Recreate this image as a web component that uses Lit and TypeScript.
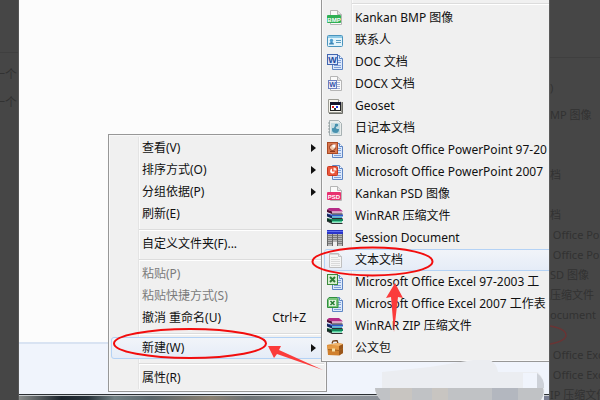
import { LitElement, html, css, svg, nothing, TemplateResult } from "lit";
import { customElement, property } from "lit/decorators.js";
import { classMap } from "lit/directives/class-map.js";

interface Item {
  label?: string;
  icon?: string;
  hint?: string;
  more?: boolean;
  off?: boolean;
  hot?: boolean;
  gap?: boolean;
}

const page = svg`<path d="M3.500 .5h7l4 4v10h-11z" fill="#fafafa" stroke="#b5b5b5"/><path d="M10.500 .5v4h4" fill="#e4e4e4" stroke="#b5b5b5"/>`;
const sheet = svg`<path d="M5.500 1.500h7l3 3v11h-10z" fill="#dce9fb" stroke="#5f86c4"/><path d="M12.500 1.500v3h3" fill="#f5faff" stroke="#5f86c4"/><path d="M11 6.500h3M11 8.500h3M7 11.500h7M7 13.500h7" stroke="#7fa0d8"/>`;
const rar = svg`
  <path d="M0 1.500L2 0h10l4 3.500H5z" fill="#b52a86"/><path d="M5 3.500h10v2H5z" fill="#d9a8c6"/><path d="M0 1.500l5 2V6L0 4z" fill="#4d0c35"/>
  <path d="M0 5.500l5 1h11v2H5z" fill="#2f5cd0"/><path d="M5 8.500h10V10H5z" fill="#55b4cf"/><path d="M0 5.500l5 2.500v2.500L0 8.500z" fill="#14265e"/>
  <path d="M0 10l5 1h11v2H5z" fill="#12855a"/><path d="M5 13h10v1.500H5z" fill="#4fd09a"/><path d="M0 10l5 2.500V15l-5-2z" fill="#0b3522"/>
  <path d="M5 6h10.500M5 10.500h10.500M0 13l5 2.500h10.500" fill="none" stroke="#17171c" stroke-width=".9"/>`;

const icons: Record<string, TemplateResult> = {
  bmp: svg`${page}<rect y="5" width="14" height="8" rx="1" fill="#2fb055"/><text x="7" y="11.500" text-anchor="middle" font-size="6" font-weight="700" fill="#fff">BMP</text>`,
  contact: svg`<rect x=".5" y="3.500" width="15" height="11" rx="1" fill="#e3f4fb" stroke="#4a94bd"/><path d="M1 4h14v2H1z" fill="#8ecae6"/><circle cx="4.500" cy="8.500" r="1.700" fill="#4f9ed0"/><path d="M2 12.500c0-3.500 5-3.500 5 0z" fill="#3c86b8"/><path d="M9 8.500h5M9 10.500h5" stroke="#5b9cc0"/>`,
  doc: svg`${sheet}<rect x=".5" y=".5" width="10" height="10" fill="#dbe6fa" stroke="#4266b0"/><text x="5.500" y="9" text-anchor="middle" font-size="9" font-weight="700" fill="#23499c">W</text>`,
  docx: svg`${page}<path d="M9 6.500h4M9 8.500h4M9 10.500h4M7 12.500h6" stroke="#a5b2d8"/><rect x="1.500" y="4.500" width="8" height="8" fill="#eceffb" stroke="#6d80c0"/><text x="5.500" y="11" text-anchor="middle" font-size="7" font-weight="700" fill="#3550a6">W</text>`,
  geo: svg`<path d="M1.500 1.500h10l3 3v10h-13z" fill="#f6f4ec" stroke="#9a9a92"/><path d="M2 15.500h13.500V4" fill="none" stroke="#6b6b66"/><path d="M11.500 1.500v3h3" fill="#fff" stroke="#9a9a92"/><rect x="3.500" y="4.500" width="10" height="8" fill="#fff" stroke="#222"/><path d="M3 4h11v3H3z" fill="#15152c"/><path d="M5 8h2v2H5z" fill="#e02020"/><path d="M9 8h2v2H9z" fill="#2038e0"/><path d="M7 10h2v2H7z" fill="#333"/>`,
  journal: svg`<path d="M2.500 .5h9l3 3v12h-12z" fill="#e9edec" stroke="#a7b1b3"/><rect x="4" y="3" width="9" height="11" fill="#c4dce2"/><path d="M5 8q3 1 3-4 4-1 3 2l-2 1q-1 2 3 2 0 4-3 4-4 0-4-3z" fill="#4791ae"/><path d="M1 3h2M1 6h2M1 9h2M1 12h2" stroke="#929e9f"/>`,
  ppt: svg`${sheet}<rect x=".5" y=".5" width="10" height="11" fill="#d9774e" stroke="#a94a25"/><circle cx="5.500" cy="5.500" r="3" fill="#f2c7a8" stroke="#8d3418"/><path d="M5.500 5.500V2.500h3v3z" fill="#fff"/><path d="M3 9.500h5" stroke="#8d3418"/>`,
  pptx: svg`${sheet}<rect x=".5" y="2.500" width="10" height="9" rx="1" fill="#e9573c" stroke="#c8381f"/><path d="M5 4.500a2.500 2.500 0 1 0 3 3H5z" fill="#fff"/><path d="M6.500 3.500v3h3a3 3 0 0 0-3-3z" fill="#ffe3d8"/>`,
  psd: svg`${page}<rect y="6" width="14" height="8" rx="1" fill="#e8316f"/><text x="7" y="12.500" text-anchor="middle" font-size="6" font-weight="700" fill="#fff">PSD</text>`,
  rar,
  session: svg`<path d="M0 0h16v16H0z" fill="#b4b4b4"/><path d="M0 0h16v4H0z" fill="#2a35c8"/><path d="M0 1.500h16" stroke="#5e6cf0"/><path d="M1 5.500h4M6 5.500h4M11 5.500h4M1 7.500h4M6 7.500h4M11 7.500h4M1 9.500h4M6 9.500h4M11 9.500h4M1 11.500h4M11 11.500h4M1 13.500h4M11 13.500h4" stroke="#7d7d7d"/><path d="M.5 4v12M5.500 4v12M10.500 4v12M15.500 4v12" stroke="#666"/><path d="M6 12h4v4H6z" fill="#efefef"/>`,
  text: svg`<path d="M2.500 1.500h9l3 3v11h-12z" fill="#f5f5f5" stroke="#c0c0c0"/><path d="M11.500 1.500v3h3" fill="#e6e6e6" stroke="#c0c0c0"/><path d="M4 1v2M6 1v2M8 1v2M10 1v2" stroke="#b5b5b5"/><path d="M4 5.500h7M4 7.500h9M4 9.500h9M4 11.500h9M4 13.500h9" stroke="#dadada"/>`,
  xls: svg`${sheet}<rect x=".5" y=".5" width="10" height="10" fill="#d9efd3" stroke="#3d8b3b"/><path d="M3 3l5 5M8 3L3 8" stroke="#2e7d34" stroke-width="2"/>`,
  xlsx: svg`${sheet}<path d="M2 1.500h8l1 1v9H.5v-8z" fill="#7cc67d" stroke="#2f8f3f"/><rect x="2" y="4" width="7" height="6" fill="#e8f6e6"/><path d="M3.500 5l4 4M7.500 5l-4 4" stroke="#237a31" stroke-width="1.500"/>`,
  bag: svg`<path d="M5 3.500L6 1l4-.500 1 3" fill="none" stroke="#6e3d14" stroke-width="1.300"/><path d="M0 5l11-2 5 1v9l-4 2.500L1 15z" fill="#d07f2c"/><path d="M12 5l4-1v9l-4 2.500z" fill="#9a561a"/><path d="M0 5l11-2 5 1-4 2z" fill="#f0b56b"/><path d="M0 5.500L12 6v4L1 9z" fill="#e59b45"/><path d="M1 9.500l11 1 4-2" fill="none" stroke="#a8641f"/><path d="M5 8.500h3v3H5z" fill="#f5dfa6"/>`,
};

const mainItems: Item[] = [
  { label: "查看(V)", more: true },
  { label: "排序方式(O)", more: true },
  { label: "分组依据(P)", more: true },
  { label: "刷新(E)" },
  { gap: true },
  { label: "自定义文件夹(F)..." },
  { gap: true },
  { label: "粘贴(P)", off: true },
  { label: "粘贴快捷方式(S)", off: true },
  { label: "撤消 重命名(U)", hint: "Ctrl+Z" },
  { gap: true },
  { label: "新建(W)", more: true, hot: true },
  { gap: true },
  { label: "属性(R)" },
];

const newItems: Item[] = [
  { gap: true },
  { label: "Kankan BMP 图像", icon: "bmp" },
  { label: "联系人", icon: "contact" },
  { label: "DOC 文档", icon: "doc" },
  { label: "DOCX 文档", icon: "docx" },
  { label: "Geoset", icon: "geo" },
  { label: "日记本文档", icon: "journal" },
  { label: "Microsoft Office PowerPoint 97-20", icon: "ppt" },
  { label: "Microsoft Office PowerPoint 2007", icon: "pptx" },
  { label: "Kankan PSD 图像", icon: "psd" },
  { label: "WinRAR 压缩文件", icon: "rar" },
  { label: "Session Document", icon: "session" },
  { label: "文本文档", icon: "text", hot: true },
  { label: "Microsoft Office Excel 97-2003 工", icon: "xls" },
  { label: "Microsoft Office Excel 2007 工作表", icon: "xlsx" },
  { label: "WinRAR ZIP 压缩文件", icon: "rar" },
  { label: "公文包", icon: "bag" },
];

@customElement("context-menu")
export class ContextMenu extends LitElement {
  @property({ attribute: false }) items: Item[] = [];

  static styles = css`
    :host {
      display: block;
      box-sizing: border-box;
      border: 1px solid #979797;
      padding: 2px;
      background: #f0f0f0;
      box-shadow: inset 0 0 0 1px #f8f8f8;
    }
    .list {
      display: flex;
      flex-direction: column;
      background: linear-gradient(90deg, transparent 27px, #e4e4e4 27px, #e4e4e4 28px, #fafafa 28px, #fafafa 29px, transparent 29px);
    }
    .item {
      display: flex;
      align-items: center;
      box-sizing: border-box;
      height: 22px;
      padding: 0 7px 0 2px;
      border: 1px solid transparent;
      border-radius: 3px;
      background: none;
      color: #111;
      font: 12px/20px "Noto Sans", "Noto Sans CJK SC", sans-serif;
      text-align: left;
      white-space: nowrap;
    }
    .hot {
      border-color: #b4d2f5;
      background: linear-gradient(#f1f4f9, #e5ecf7);
    }
    .off {
      color: #7b7b7b;
    }
    .icon {
      flex: none;
      width: 16px;
      height: 16px;
      margin-right: 12px;
      font-family: "Liberation Sans", sans-serif;
    }
    .label {
      flex: 1;
      min-width: 0;
      overflow: hidden;
    }
    .hint {
      margin-right: 10px;
    }
    .arrow {
      flex: none;
      border: 4px solid transparent;
      border-left: 5px solid #111;
      border-right: 0;
    }
    .gap {
      height: 8px;
      margin: 0 0 0 28px;
      border: 0;
      background: linear-gradient(transparent 4px, #dcdcdc 4px, #dcdcdc 5px, #fff 5px, #fff 6px, transparent 6px);
    }
  `;

  render() {
    return html`<div class="list" role="menu">
      ${this.items.map((i) =>
        i.gap
          ? html`<hr class="gap" />`
          : html`<button class=${classMap({ item: true, hot: !!i.hot, off: !!i.off })} role="menuitem" ?disabled=${i.off}>
              <svg class="icon" viewBox="0 0 16 16" aria-hidden="true">${i.icon ? icons[i.icon] : nothing}</svg>
              <span class="label">${i.label}</span>
              ${i.hint ? html`<span class="hint">${i.hint}</span>` : nothing}
              ${i.more ? html`<span class="arrow"></span>` : nothing}
            </button>`
      )}
    </div>`;
  }
}

@customElement("app-root")
export class AppRoot extends LitElement {
  static styles = css`
    :host {
      display: grid;
      grid-template-columns: 19px minmax(0, 1fr) 51px;
      height: 100vh;
      overflow: hidden;
      background: #464646;
      color: #323232;
      font: 12px/20px "Noto Sans", "Noto Sans CJK SC", sans-serif;
    }
    .side {
      min-width: 0;
      overflow: hidden;
      white-space: nowrap;
    }
    .left {
      box-sizing: border-box;
      border-right: 1px solid #565656;
      padding-top: 52px;
    }
    .rule {
      height: 1px;
      margin: 0 0 2px;
      border: 0;
      background: #3f3f3f;
    }
    .step {
      display: flex;
      justify-content: flex-end;
      margin: 0;
      padding: 12px 1px 0 0;
      line-height: 16px;
    }
    .right {
      position: relative;
      box-sizing: border-box;
      border-left: 1px solid #5a5a5a;
      padding-top: 57px;
    }
    .faded {
      margin: 0;
      padding: 18px 0 0;
      list-style: none;
      font-size: 11px;
      white-space: pre;
    }
    .faded li {
      height: 20px;
    }
    .faded .first {
      height: 27px;
    }
    .trace {
      position: absolute;
      left: 0;
      top: 325px;
      width: 18px;
      height: 20px;
    }
    .desktop {
      position: relative;
      display: flex;
      flex-direction: column;
      overflow: hidden;
      background: #fcfcfc;
    }
    .files {
      flex: 1;
    }
    .details {
      height: 50px;
      border-top: 2px solid #d9e3f2;
      background: #f0f4fc;
    }
    .taskbar {
      height: 5px;
      border-top: 1px solid #2b2f33;
      background: linear-gradient(90deg, #8a8d8c, #1b232b 8%, #28323a 13%, #718084 18%, #59646a 25%, #8a8173 36%, #6d7377 43%, #90959a 60%, #777c90);
      box-shadow: inset 0 1px #c8cccf;
    }
    .main {
      position: absolute;
      left: 89px;
      top: 134px;
      width: 219px;
    }
    .new {
      position: absolute;
      left: 302px;
      right: -12px;
      top: -4px;
    }
    .marks {
      position: absolute;
      left: 0;
      top: 0;
      width: 530px;
      height: 400px;
    }
  `;

  render() {
    const faded = [")", "MP 图像", "", "", "档", "", "档", " Office Po", " Office Po", "SD 图像", "压缩文件", "ocument", "", " Office Exc", " Office Exc", "IP 压缩文件"];
    return html`
      <aside class="side left">
        <hr class="rule" />
        <p class="step">一个</p>
        <p class="step">一个</p>
      </aside>
      <main class="desktop">
        <div class="files"></div>
        <div class="details"></div>
        <div class="taskbar"></div>
        <context-menu class="main" .items=${mainItems}></context-menu>
        <context-menu class="new" .items=${newItems}></context-menu>
        <svg class="marks" viewBox="19 0 530 400" aria-hidden="true">
          <path d="M382 372L430 367l43-7h17q7 4 8 12h40q8 8 6 24v4H381q-6-6-6-12h7z" fill="#ebedf1" />
          <path d="M375 388h168q2 6-2 12H381q-6-6-6-12z" fill="#c0c2c5" />
          <path d="M390 388h22v12h-22zM432 388h16v12h-16z" fill="#c8c5c1" />
          <path d="M492 388h26v12h-26z" fill="#b3b7bf" />
          <path d="M523 373h14v15h-14z" fill="#f0f4fc" />
          <path d="M537 373q8 6 7 15h-7z" fill="#cdd1d8" />
          <ellipse cx="190" cy="343.500" rx="76" ry="14.500" fill="none" stroke="#f20d0d" stroke-width="2" />
          <ellipse cx="372.500" cy="261.500" rx="60" ry="14" fill="none" stroke="#f20d0d" stroke-width="2" />
          <path d="M268 346l13 0-2 4 44 20-46-16-3 4z" fill="#fb3b3b" />
          <path d="M395 283l8 15-5-1-4 35-3-35-5 1z" fill="#fb3b3b" />
        </svg>
      </main>
      <aside class="side right">
        <hr class="rule" />
        <ul class="faded">${faded.map((t, i) => html`<li class=${i ? "" : "first"}>${t}</li>`)}</ul>
        <svg class="trace" viewBox="0 0 18 20" aria-hidden="true"><path d="M0 1q16 3 16 9t-16 9" fill="none" stroke="#6a3434" stroke-width="1.500" /></svg>
      </aside>
    `;
  }
}
